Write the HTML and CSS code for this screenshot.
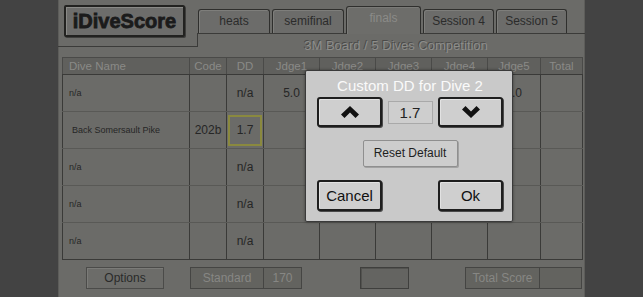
FILE: index.html
```html
<!DOCTYPE html>
<html lang="en">
<head>
  <meta charset="UTF-8" />
  <title>iDiveScore</title>
  <meta name="viewport" content="width=device-width, initial-scale=1.0" />
  <link rel="stylesheet" href="styles.css">
</head>
<body>
  <div class="screen">
    <div class="side"></div>

    <div class="main">
      <div class="top">
        <div class="brand">
          <div class="logo">iDiveScore</div>
        </div>
        <div class="tabs">
          <div class="tab w72">heats</div>
          <div class="tab w72">semifinal</div>
          <div class="tab active">finals</div>
          <div class="tab w71">Session 4</div>
          <div class="tab w71">Session 5</div>
        </div>
        <div class="event">3M Board / 5 Dives Competition</div>
      </div>

      <table class="sheet">
        <colgroup>
          <col style="width:127px">
          <col style="width:37px">
          <col style="width:37px">
          <col style="width:56px">
          <col style="width:56px">
          <col style="width:56px">
          <col style="width:56px">
          <col style="width:53px">
          <col style="width:42px">
        </colgroup>
        <thead>
          <tr>
            <th class="name">Dive Name</th>
            <th>Code</th>
            <th>DD</th>
            <th>Jdge1</th>
            <th>Jdge2</th>
            <th>Jdge3</th>
            <th>Jdge4</th>
            <th>Jdge5</th>
            <th>Total</th>
          </tr>
        </thead>
        <tbody>
          <tr>
            <td class="name">n/a</td>
            <td></td>
            <td>n/a</td>
            <td>5.0</td>
            <td></td>
            <td></td>
            <td></td>
            <td class="under">5.0</td>
            <td></td>
          </tr>
          <tr>
            <td class="name dive">Back Somersault Pike</td>
            <td>202b</td>
            <td><span class="pick">1.7</span></td>
            <td></td>
            <td></td>
            <td></td>
            <td></td>
            <td></td>
            <td></td>
          </tr>
          <tr>
            <td class="name">n/a</td>
            <td></td>
            <td>n/a</td>
            <td></td><td></td><td></td><td></td><td></td><td></td>
          </tr>
          <tr>
            <td class="name">n/a</td>
            <td></td>
            <td>n/a</td>
            <td></td><td></td><td></td><td></td><td></td><td></td>
          </tr>
          <tr>
            <td class="name">n/a</td>
            <td></td>
            <td>n/a</td>
            <td></td><td></td><td></td><td></td><td></td><td></td>
          </tr>
        </tbody>
      </table>

      <div class="bottom">
        <div class="opt">Options</div>
        <div class="group">
          <div class="box lbl">Standard</div>
          <div class="box val">170</div>
        </div>
        <div class="blank"></div>
        <div class="group total">
          <div class="box lbl">Total Score</div>
          <div class="box val"></div>
        </div>
      </div>

      <!-- popup over the score sheet -->
      <div class="dialog">
        <div class="dlg-title">Custom DD for Dive 2</div>
        <div class="row">
          <div class="btn">
            <svg width="18" height="12" viewBox="0 0 18 12"><polygon points="9,0 18,8.5 14.5,12 9,6.5 3.5,12 0,8.5" fill="#111"/></svg>
          </div>
          <div class="value">1.7</div>
          <div class="btn">
            <svg width="18" height="12" viewBox="0 0 18 12"><polygon points="9,12 18,3.5 14.5,0 9,5.5 3.5,0 0,3.5" fill="#111"/></svg>
          </div>
        </div>
        <div class="reset">Reset Default</div>
        <div class="row actions">
          <div class="btn">Cancel</div>
          <div class="btn">Ok</div>
        </div>
      </div>
    </div>

    <div class="side"></div>
  </div>
</body>
</html>
```

FILE: styles.css
```css
body {
  margin: 0;
  background: #434343;
  font-family: "Liberation Sans", Arial, sans-serif;
  overflow: hidden;
}

.screen {
  display: flex;
  height: 297px;
}

.side {
  width: 58px;
  background: #434343;
}

.main {
  width: 527px;
  position: relative;
  background: #6b6b68;
  box-shadow: inset 1px 0 0 #5d5d5a, inset -1px 0 0 #5d5d5a;
}

/* header: logo + tabs + event name */
.top {
  display: grid;
  grid-template-columns: 139px 1fr;
  grid-template-rows: 34px 23px;
}

.brand {
  grid-row: 1 / 3;
  align-self: start;
  box-sizing: border-box;
  height: 47px;
  padding: 5px 0 0 6px;
  border-bottom: 1px solid #3b3b39;
}

.logo {
  box-sizing: border-box;
  width: 121px;
  height: 32px;
  border: 2px solid #222220;
  border-radius: 2px;
  background: #6d6d6b;
  box-shadow: inset 1px 1px 0 #8a8a87, 1px 1px 0 #3e3e3c;
  color: #1b1b1b;
  font-size: 20px;
  font-weight: bold;
  -webkit-text-stroke: 0.8px #1b1b1b;
  text-align: center;
  line-height: 28px;
}

.tabs {
  display: flex;
  align-items: flex-end;
  gap: 2px;
  padding-left: 1px;
  border-bottom: 1px solid #3b3b39;
}

.tab {
  box-sizing: border-box;
  height: 24px;
  border: 1px solid #2f2f2d;
  border-bottom: none;
  border-radius: 3px 3px 0 0;
  background: #6c6c6a;
  box-shadow: inset 1px 1px 0 #7e7e7b;
  color: #2b2b2b;
  font-size: 12px;
  line-height: 23px;
  text-align: center;
}

.w72 { width: 72px; }
.w71 { width: 71px; }

.tab.active {
  width: 75px;
  height: 28px;
  margin-bottom: -1px;
  background: #6d6d6a;
  box-shadow: inset 1px 1px 0 #7a7a77;
  color: #8b8b88;
}

.event {
  grid-column: 2;
  grid-row: 2;
  padding-left: 10px;
  font-size: 13px;
  line-height: 23px;
  text-align: center;
  color: #8d8d8a;
  text-shadow: -1px -1px 0 #4a4a48;
  background: linear-gradient(#3b3b39, #3b3b39) no-repeat 0 0 / 1px 13px;
}

/* score sheet */
.sheet {
  width: 520px;
  margin-left: 4px;
  border-collapse: collapse;
  table-layout: fixed;
  border: 1px solid #3a3a38;
}

.sheet th {
  height: 16px;
  padding: 0;
  background: #60605d;
  border: 1px solid #4a4a48;
  border-bottom-color: #3a3a38;
  color: #8a8a87;
  font-size: 11.5px;
  font-weight: normal;
  text-align: center;
}

.sheet td {
  height: 36px;
  padding: 0;
  border-left: 1px solid #3a3a38;
  border-right: 1px solid #3a3a38;
  border-top: 1px solid #595956;
  border-bottom: 1px solid #595956;
  color: #262626;
  font-size: 12px;
  text-align: center;
}

.sheet tr:last-child td {
  border-bottom-color: #3a3a38;
}

.sheet .name {
  text-align: left;
  padding-left: 6px;
}

.sheet td.name {
  font-size: 9px;
}

.sheet td.dive {
  padding-left: 9px;
}

/* only the tail of this score peeks out from under the popup */
.sheet td.under {
  text-align: right;
  padding-right: 18px;
  overflow: hidden;
}

.pick {
  display: block;
  box-sizing: border-box;
  width: 34px;
  height: 31px;
  margin: 0 auto;
  border: 2px solid #8a893f;
  line-height: 27px;
}

/* footer */
.bottom {
  display: flex;
  align-items: center;
  height: 22px;
  margin-top: 7px;
  padding: 0 3px 0 28px;
}

.opt {
  box-sizing: border-box;
  width: 78px;
  height: 22px;
  margin-right: 26px;
  border: 1px solid #4b4b49;
  background: #6c6c69;
  box-shadow: inset 1px 1px 0 #7b7b78;
  color: #2a2a2a;
  font-size: 12px;
  line-height: 20px;
  text-align: center;
}

.group {
  display: flex;
}

.box {
  box-sizing: border-box;
  height: 22px;
  border: 1px solid #454543;
  background: #63635f;
  color: #878784;
  font-size: 12px;
  line-height: 20px;
  text-align: center;
}

.group .lbl { width: 74px; }
.group .val { width: 38px; border-left: none; }
.total .lbl { width: 75px; }
.total .val { width: 42px; }

.blank {
  box-sizing: border-box;
  width: 49px;
  height: 22px;
  margin-left: 58px;
  border: 1px solid #3f3f3d;
  background: #646461;
  box-shadow: inset 1px 1px 0 #52524f;
}

.total {
  margin-left: auto;
}

/* custom DD popup */
.dialog {
  position: absolute;
  left: 247px;
  top: 70px;
  box-sizing: border-box;
  width: 208px;
  height: 152px;
  padding: 5px 9px 0 11px;
  background: #c9c9c9;
  border: 1px solid #3a3a3a;
  border-radius: 2px;
  box-shadow: 0 0 3px rgba(0, 0, 0, 0.45);
}

.dlg-title {
  height: 20px;
  color: #fafafa;
  font-size: 15px;
  line-height: 20px;
  text-align: center;
}

.row {
  display: flex;
  justify-content: space-between;
  align-items: center;
  margin-top: 1px;
}

.btn {
  box-sizing: border-box;
  width: 65px;
  height: 30px;
  display: flex;
  align-items: center;
  justify-content: center;
  border: 2px solid #1e1e1e;
  border-radius: 3px;
  background: #cfcfcf;
  box-shadow: inset 1px 1px 0 #e2e2e2, 1px 1px 0 #4a4a4a;
  color: #111;
  font-size: 15px;
}

.value {
  box-sizing: border-box;
  width: 45px;
  height: 23px;
  border: 1px solid #a9a9a9;
  background: #cecece;
  color: #222;
  font-size: 15px;
  line-height: 21px;
  text-align: center;
}

.reset {
  box-sizing: border-box;
  width: 95px;
  height: 27px;
  margin: 13px auto 0;
  border: 1px solid #8f8f8f;
  border-radius: 2px;
  background: #cdcdcd;
  box-shadow: 1px 1px 0 #a2a2a2;
  color: #1e1e1e;
  font-size: 12px;
  line-height: 25px;
  text-align: center;
}

.actions {
  margin-top: 13px;
}

.actions .btn {
  height: 31px;
}
```
